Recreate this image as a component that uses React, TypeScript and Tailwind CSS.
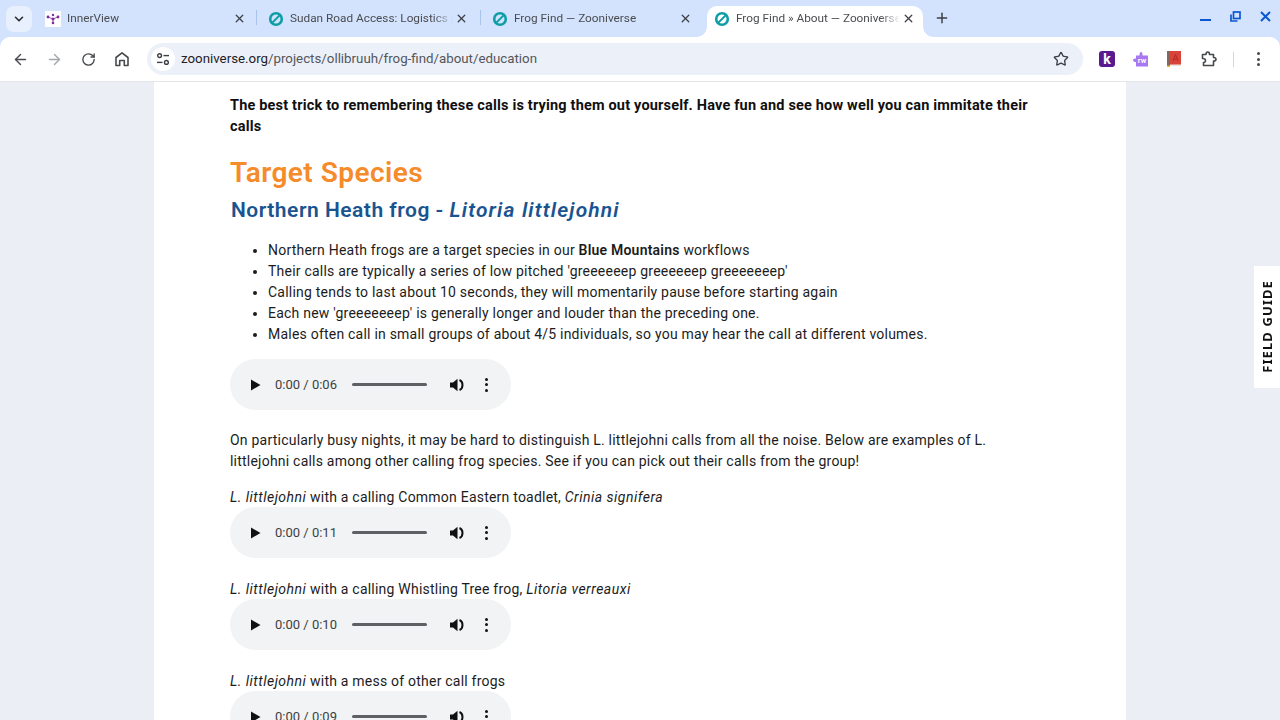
import { ArrowLeft, ArrowRight, ChevronDown, Plus, RotateCw, Star, X } from "lucide-react";

const FONT = "font-['Roboto',sans-serif]";
const UI = "font-['Roboto',sans-serif]";

function ZooIcon() {
  return (
    <svg width="16" height="16" viewBox="0 0 16 16" className="shrink-0">
      <circle cx="8" cy="8" r="5.8" fill="none" stroke="#0d9ea6" strokeWidth="2.6" />
      <path d="M4 12L12.5 3.5" stroke="#0d9ea6" strokeWidth="1.8" />
    </svg>
  );
}

function InnerViewIcon() {
  return (
    <svg width="16" height="16" viewBox="0 0 16 16" className="shrink-0">
      <rect width="16" height="16" fill="#fff" />
      <circle cx="3" cy="6" r="1.4" fill="#7b2d9e" />
      <circle cx="13" cy="6" r="1.4" fill="#7b2d9e" />
      <circle cx="8" cy="4" r="1.2" fill="#7b2d9e" />
      <circle cx="8" cy="8" r="1.5" fill="#7b2d9e" />
      <circle cx="8" cy="12" r="1.3" fill="#7b2d9e" />
      <path d="M3 6L8 8L13 6M8 8V12" stroke="#7b2d9e" strokeWidth="0.8" fill="none" />
    </svg>
  );
}

function Tab({ title, icon, active, sep, width }: { title: string; icon: React.ReactNode; active?: boolean; sep?: boolean; width: string }) {
  return (
    <div className={`relative flex h-[31px] shrink-0 items-center pb-[6px] ${width} ${active ? "rounded-t-[10px] bg-white pl-[7px] pr-[8px]" : "pl-[11px]"}`}>
      {icon}
      <span className={`ml-[6px] mr-[2px] min-w-0 flex-1 overflow-hidden whitespace-nowrap text-[11.8px] text-[#4a4c50] [mask-image:linear-gradient(to_right,#000_88%,transparent)] ${UI}`}>{title}</span>
      <X size={13} strokeWidth={2.4} className="shrink-0 text-[#3c3f43]" />
      {sep && <span className="absolute right-0 top-[4px] h-[15px] w-px bg-[#a9c3ec]" />}
      {active && <span className="absolute bottom-0 left-[-10px] h-[10px] w-[10px] bg-[radial-gradient(circle_at_0_0,#d3e3fd_9.5px,#fff_10px)]" />}
      {active && <span className="absolute bottom-0 right-[-10px] h-[10px] w-[10px] bg-[radial-gradient(circle_at_100%_0,#d3e3fd_9.5px,#fff_10px)]" />}
    </div>
  );
}

function SiteInfoIcon() {
  return (
    <svg width="14" height="14" viewBox="0 0 14 14" fill="none" stroke="#3c3f43" strokeWidth="1.4">
      <circle cx="3.6" cy="3.6" r="1.9" />
      <path d="M7.5 3.6H13" />
      <path d="M1 10.4H6.5" />
      <circle cx="10.4" cy="10.4" r="1.9" />
    </svg>
  );
}

function RwIcon() {
  return (
    <svg width="16" height="16" viewBox="0 0 16 16" className="shrink-0">
      <path d="M3 4.5H6.5C6.5 2 7 1 8 1S9.500 2 9.500 4.500H15V15.500H3V11H2.500C.5 11 0 10 0 9.300S.5 7.500 2.500 7.500H3Z" fill="#a877f2" />
      <text x="9" y="12" textAnchor="middle" fontSize="7.500" fontWeight="700" fill="#fff" fontFamily="Roboto, sans-serif">rw</text>
    </svg>
  );
}

function BookIcon() {
  return (
    <svg width="14" height="16" viewBox="0 0 14 16" className="shrink-0">
      <rect x="0" y="0" width="14" height="14" fill="#d9443a" />
      <rect x="0" y="0" width="3" height="16" fill="#7a6a62" />
      <rect x="3" y="13.500" width="11" height="1.500" fill="#eee3dc" />
      <rect x="0" y="14.500" width="3" height="1.500" fill="#f0b429" />
      <path d="M6 10L8.500 3.500L11 10M7 8H10" fill="none" stroke="#b52a22" strokeWidth="1" />
    </svg>
  );
}

function ExtensionsIcon() {
  return (
    <svg width="16" height="16" viewBox="0 0 16 16" fill="none" stroke="#474a4d" strokeWidth="1.6" strokeLinejoin="round" className="shrink-0">
      <path d="M1.500 3.500H5C5 1.500 5.800 1 6.800 1S8.500 1.500 8.500 3.500H12.500V6.500C14.500 6.500 15 7.200 15 8.200S14.500 10 12.500 10V14.500H2.500V11.500C4 11.500 4.500 10.500 4.500 9.500S3.500 7.500 1.500 7.500Z" />
    </svg>
  );
}

function Toolbar() {
  return (
    <div className="flex h-[44px] items-center rounded-t-[10px] bg-white pl-[12px]">
      <ArrowLeft size={17} strokeWidth={2} className="text-[#474a4d]" />
      <ArrowRight size={17} strokeWidth={2} className="ml-[17px] text-[#a4a6a9]" />
      <RotateCw size={15} strokeWidth={2.2} className="ml-[18px] text-[#474a4d]" />
      <svg width="16" height="16" viewBox="0 0 16 16" fill="none" stroke="#474a4d" strokeWidth="1.6" strokeLinejoin="round" className="ml-[18px] shrink-0">
        <path d="M2 14.500V6.500L8 1.800L14 6.500V14.500H10.300V9.500H5.700V14.500Z" />
      </svg>
      <div className="ml-[17px] flex h-[32px] w-[936px] shrink-0 items-center rounded-full bg-[#ecf0f9] pl-[4px] pr-[14px]">
        <span className="flex h-[24px] w-[24px] items-center justify-center rounded-full bg-white">
          <SiteInfoIcon />
        </span>
        <span className={`ml-[6px] flex-1 text-[13.3px] text-[#53565a] ${UI}`}>
          <span className="text-[#1f2124]">zooniverse.org</span>/projects/ollibruuh/frog-find/about/education
        </span>
        <Star size={16} strokeWidth={2} className="text-[#3c3f43]" />
      </div>
      <span className={`ml-[16px] flex h-[16px] w-[16px] shrink-0 items-center justify-center rounded-[3px] bg-[#5a1a8f] text-[14px] font-bold leading-none text-white ${UI}`}>k</span>
      <span className="ml-[18px]"><RwIcon /></span>
      <span className="ml-[18px]"><BookIcon /></span>
      <span className="ml-[20px]"><ExtensionsIcon /></span>
      <span className="ml-[16px] h-[15px] w-px shrink-0 bg-[#c8d8f3]" />
      <span className="ml-[23px] flex shrink-0 flex-col gap-[2.5px]">
        <i className="block h-[3px] w-[3px] rounded-full bg-[#474a4d]" />
        <i className="block h-[3px] w-[3px] rounded-full bg-[#474a4d]" />
        <i className="block h-[3px] w-[3px] rounded-full bg-[#474a4d]" />
      </span>
    </div>
  );
}

function WindowControls() {
  return (
    <div className="ml-auto flex h-[31px] items-start pr-[9px] pt-[3px]">
      <span className="mr-[19px] mt-[10px] h-[2px] w-[11px] bg-[#0b57d0]" />
      <svg width="11" height="11" viewBox="0 0 11 11" fill="none" stroke="#0b57d0" strokeWidth="1.700" className="mr-[19px] mt-[2px]">
        <rect x="3.500" y="1" width="6.500" height="6.500" />
        <path d="M1 3.500V10H7.500" />
      </svg>
      <svg width="11" height="11" viewBox="0 0 11 11" stroke="#0b57d0" strokeWidth="2" className="mt-[2px]">
        <path d="M1 1L10 10M10 1L1 10" />
      </svg>
    </div>
  );
}

function Chrome() {
  return (
    <header className="shrink-0 border-b border-[#e3e5e8] bg-[#d3e3fd]">
      <div className="flex h-[37px] items-end pl-[6px]">
        <div className="mb-[5px] mr-[2px] flex h-[26px] w-[26px] shrink-0 items-center justify-center rounded-[8px] bg-[#e8f0fe]">
          <ChevronDown size={14} strokeWidth={2.8} className="text-[#2b2d30]" />
        </div>
        <Tab title="InnerView" icon={<InnerViewIcon />} sep width="w-[223px] pr-[11px]" />
        <Tab title="Sudan Road Access: Logistics (" icon={<ZooIcon />} sep width="w-[224px] pr-[13px]" />
        <Tab title="Frog Find — Zooniverse" icon={<ZooIcon />} width="w-[226px] pr-[15px]" />
        <Tab title="Frog Find » About — Zooniverse" icon={<ZooIcon />} active width="w-[216px]" />
        <Plus size={16} strokeWidth={2.2} className="mb-[11px] ml-[11px] text-[#3c3f43]" />
        <WindowControls />
      </div>
      <Toolbar />
    </header>
  );
}

function Audio({ time }: { time: string }) {
  return (
    <div className={`flex h-[51px] w-[281px] items-center rounded-full bg-[#f1f3f4] pl-[21px] tracking-normal ${UI}`}>
      <svg width="10" height="12" viewBox="0 0 10 12" className="shrink-0">
        <path d="M0 0.500L9.500 6L0 11.500Z" fill="#111" />
      </svg>
      <span className="ml-[14px] w-[77px] shrink-0 whitespace-nowrap text-[13px] text-[#3c3f43]">{time}</span>
      <span className="h-[3px] w-[75px] shrink-0 rounded-full bg-[#5f6063]" />
      <svg width="16" height="16" viewBox="0 0 16 16" className="ml-[22px] shrink-0">
        <path d="M1 5.500H4L8.500 1.800V14.200L4 10.500H1Z" fill="#111" />
        <path d="M10.500 3C14.500 4.500 14.500 11.500 10.500 13" fill="none" stroke="#111" strokeWidth="2" />
      </svg>
      <span className="ml-[20px] flex flex-col gap-[2.5px]">
        <i className="block h-[3px] w-[3px] rounded-full bg-[#111]" />
        <i className="block h-[3px] w-[3px] rounded-full bg-[#111]" />
        <i className="block h-[3px] w-[3px] rounded-full bg-[#111]" />
      </span>
    </div>
  );
}

function Clip({ label, other, time }: { label: string; other?: string; time: string }) {
  return (
    <div className="mt-[21px] first:mt-0">
      <p className="h-[20px] whitespace-nowrap">
        <em className="tracking-[0.48px]">L. littlejohni</em> {label} {other && <em className="tracking-[0.48px]">{other}</em>}
      </p>
      <Audio time={time} />
    </div>
  );
}

export default function App() {
  return (
    <div className="flex h-[720px] w-[1280px] flex-col overflow-hidden bg-[#ebeff5]">
      <Chrome />
      <main className="relative min-h-0 flex-1">
        <article className={`ml-[154px] h-full w-[972px] overflow-hidden bg-white pl-[76px] pr-[90px] pt-[13px] text-[14px] leading-[21px] tracking-[0.22px] text-[#1c1c1c] ${FONT}`}>
          <p className="text-[14.5px] font-bold tracking-[0.18px] text-[#101010]">
            The best trick to remembering these calls is trying them out yourself. Have fun and see how well you can immitate their calls
          </p>
          <h2 className="mt-[19px] text-[28px] font-semibold leading-[34px] tracking-[0.45px] text-[#f58b2a]">Target Species</h2>
          <h3 className="mt-[6px] pl-px text-[21px] font-semibold leading-[28px] tracking-[0.5px] text-[#1a5490]">
            Northern Heath frog - <em className="tracking-[1.15px]">Litoria littlejohni</em>
          </h3>
          <ul className="ml-[38px] mt-[16px] list-disc">
            <li>Northern Heath frogs are a target species in our <b className="font-semibold">Blue Mountains</b> workflows</li>
            <li>Their calls are typically a series of low pitched 'greeeeeep greeeeeep greeeeeeep'</li>
            <li>Calling tends to last about 10 seconds, they will momentarily pause before starting again</li>
            <li>Each new 'greeeeeeep' is generally longer and louder than the preceding one.</li>
            <li>Males often call in small groups of about 4/5 individuals, so you may hear the call at different volumes.</li>
          </ul>
          <div className="mt-[14px]">
            <Audio time="0:00 / 0:06" />
          </div>
          <p className="mt-[20px]">
            On particularly busy nights, it may be hard to distinguish L. littlejohni calls from all the noise. Below are examples of L. littlejohni calls among other calling frog species. See if you can pick out their calls from the group!
          </p>
          <div className="mt-[15px]">
            <Clip label="with a calling Common Eastern toadlet," other="Crinia signifera" time="0:00 / 0:11" />
            <Clip label="with a calling Whistling Tree frog," other="Litoria verreauxi" time="0:00 / 0:10" />
            <Clip label="with a mess of other call frogs" time="0:00 / 0:09" />
          </div>
        </article>
        <div className="absolute right-0 top-[184px] flex h-[122px] w-[26px] items-center justify-center bg-white">
          <span className={`ml-[2px] mb-[2px] rotate-180 whitespace-nowrap font-['Noto_Sans',sans-serif] text-[13px] font-bold tracking-[1.1px] text-[#101010] [writing-mode:vertical-rl]`}>FIELD GUIDE</span>
        </div>
      </main>
    </div>
  );
}
